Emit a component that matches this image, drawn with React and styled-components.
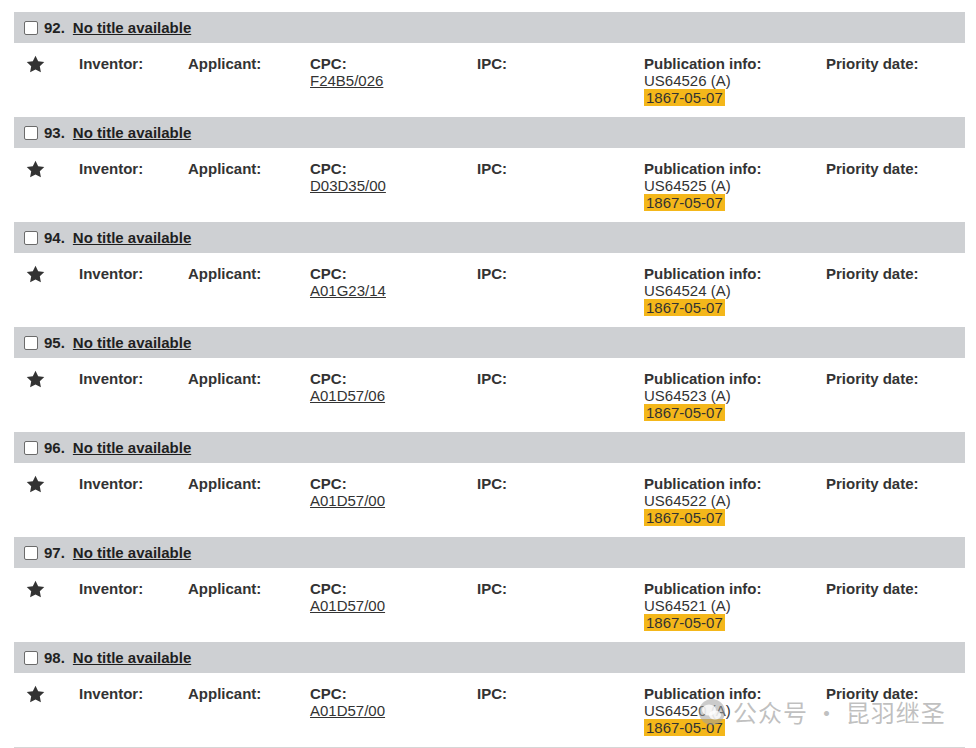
import React from "react";
import styled, { createGlobalStyle } from "styled-components";

const Global = createGlobalStyle`
  html, body { margin: 0; padding: 0; background: #ffffff; }
  body { font-family: "Liberation Sans", Arial, sans-serif; color: #333; }
`;

const Page = styled.div`
  position: relative;
  width: 976px;
  height: 748px;
  overflow: hidden;
  padding: 12px 11px 0 14px;
  box-sizing: border-box;
`;

const List = styled.div`
  display: flex;
  flex-direction: column;
  border-bottom: 1px solid #d6d6d6;
`;

const Header = styled.div`
  display: flex;
  align-items: center;
  height: 31px;
  background: #ced0d3;
  padding-left: 10px;
  font-size: 15px;
  font-weight: bold;
  color: #222;
`;

const Box = styled.span`
  width: 12px;
  height: 12px;
  border: 1px solid #6b6b6b;
  border-radius: 2px;
  background: #fff;
  margin-right: 6px;
  margin-top: 1px;
`;

const Num = styled.span`
  margin-right: 8px;
`;

const Title = styled.a`
  color: #1f1f1f;
  text-decoration: underline;
  cursor: pointer;
`;

const Body = styled.div`
  display: grid;
  grid-template-columns: 65px 109px 122px 167px 167px 182px 1fr;
  height: 74px;
  box-sizing: border-box;
  padding-top: 12px;
  font-size: 15px;
  line-height: 17px;
`;

const StarCell = styled.div`
  padding-left: 12px;
`;

const Cell = styled.div`
  display: flex;
  flex-direction: column;
  align-items: flex-start;
`;

const Label = styled.span`
  font-weight: bold;
  color: #333;
`;

const Value = styled.span`
  color: #333;
`;

const Code = styled.a`
  color: #333;
  text-decoration: underline;
`;

const Highlight = styled.span`
  background: #f4b71a;
  color: #333;
  padding: 0 2px;
`;

const Watermark = styled.div`
  position: absolute;
  left: 697px;
  top: 694px;
  display: flex;
  align-items: center;
  gap: 6px;
  font-family: "Noto Sans CJK SC", sans-serif;
  font-size: 24px;
  color: rgba(150, 150, 150, 0.6);
  letter-spacing: 1px;
  pointer-events: none;
`;

const Star = () => (
  <svg width="19" height="18" viewBox="0 0 24 23">
    <path
      d="M12 0.8l3.4 7.2 7.8 1-5.7 5.4 1.4 7.8L12 18.4l-6.9 3.8 1.4-7.8L0.8 9l7.8-1z"
      fill="#333"
    />
  </svg>
);

const WeChat = () => (
  <svg width="30" height="28" viewBox="0 0 30 28">
    <circle cx="15" cy="14" r="13" fill="rgba(160,160,160,0.55)" />
    <ellipse cx="12" cy="12" rx="7" ry="5.5" fill="rgba(255,255,255,0.8)" />
    <ellipse cx="18" cy="17" rx="6" ry="4.5" fill="rgba(255,255,255,0.8)" />
  </svg>
);

const records = [
  { n: 92, cpc: "F24B5/026", pub: "US64526 (A)" },
  { n: 93, cpc: "D03D35/00", pub: "US64525 (A)" },
  { n: 94, cpc: "A01G23/14", pub: "US64524 (A)" },
  { n: 95, cpc: "A01D57/06", pub: "US64523 (A)" },
  { n: 96, cpc: "A01D57/00", pub: "US64522 (A)" },
  { n: 97, cpc: "A01D57/00", pub: "US64521 (A)" },
  { n: 98, cpc: "A01D57/00", pub: "US64520 (A)" },
];

export default function App() {
  return (
    <>
      <Global />
      <Page>
        <List>
          {records.map((r) => (
            <React.Fragment key={r.n}>
              <Header>
                <Box />
                <Num>{r.n}.</Num>
                <Title>No title available</Title>
              </Header>
              <Body>
                <StarCell>
                  <Star />
                </StarCell>
                <Cell>
                  <Label>Inventor:</Label>
                </Cell>
                <Cell>
                  <Label>Applicant:</Label>
                </Cell>
                <Cell>
                  <Label>CPC:</Label>
                  <Code>{r.cpc}</Code>
                </Cell>
                <Cell>
                  <Label>IPC:</Label>
                </Cell>
                <Cell>
                  <Label>Publication info:</Label>
                  <Value>{r.pub}</Value>
                  <Highlight>1867-05-07</Highlight>
                </Cell>
                <Cell>
                  <Label>Priority date:</Label>
                </Cell>
              </Body>
            </React.Fragment>
          ))}
        </List>
        <Watermark>
          <WeChat />
          <span>公众号 · 昆羽继圣</span>
        </Watermark>
      </Page>
    </>
  );
}
